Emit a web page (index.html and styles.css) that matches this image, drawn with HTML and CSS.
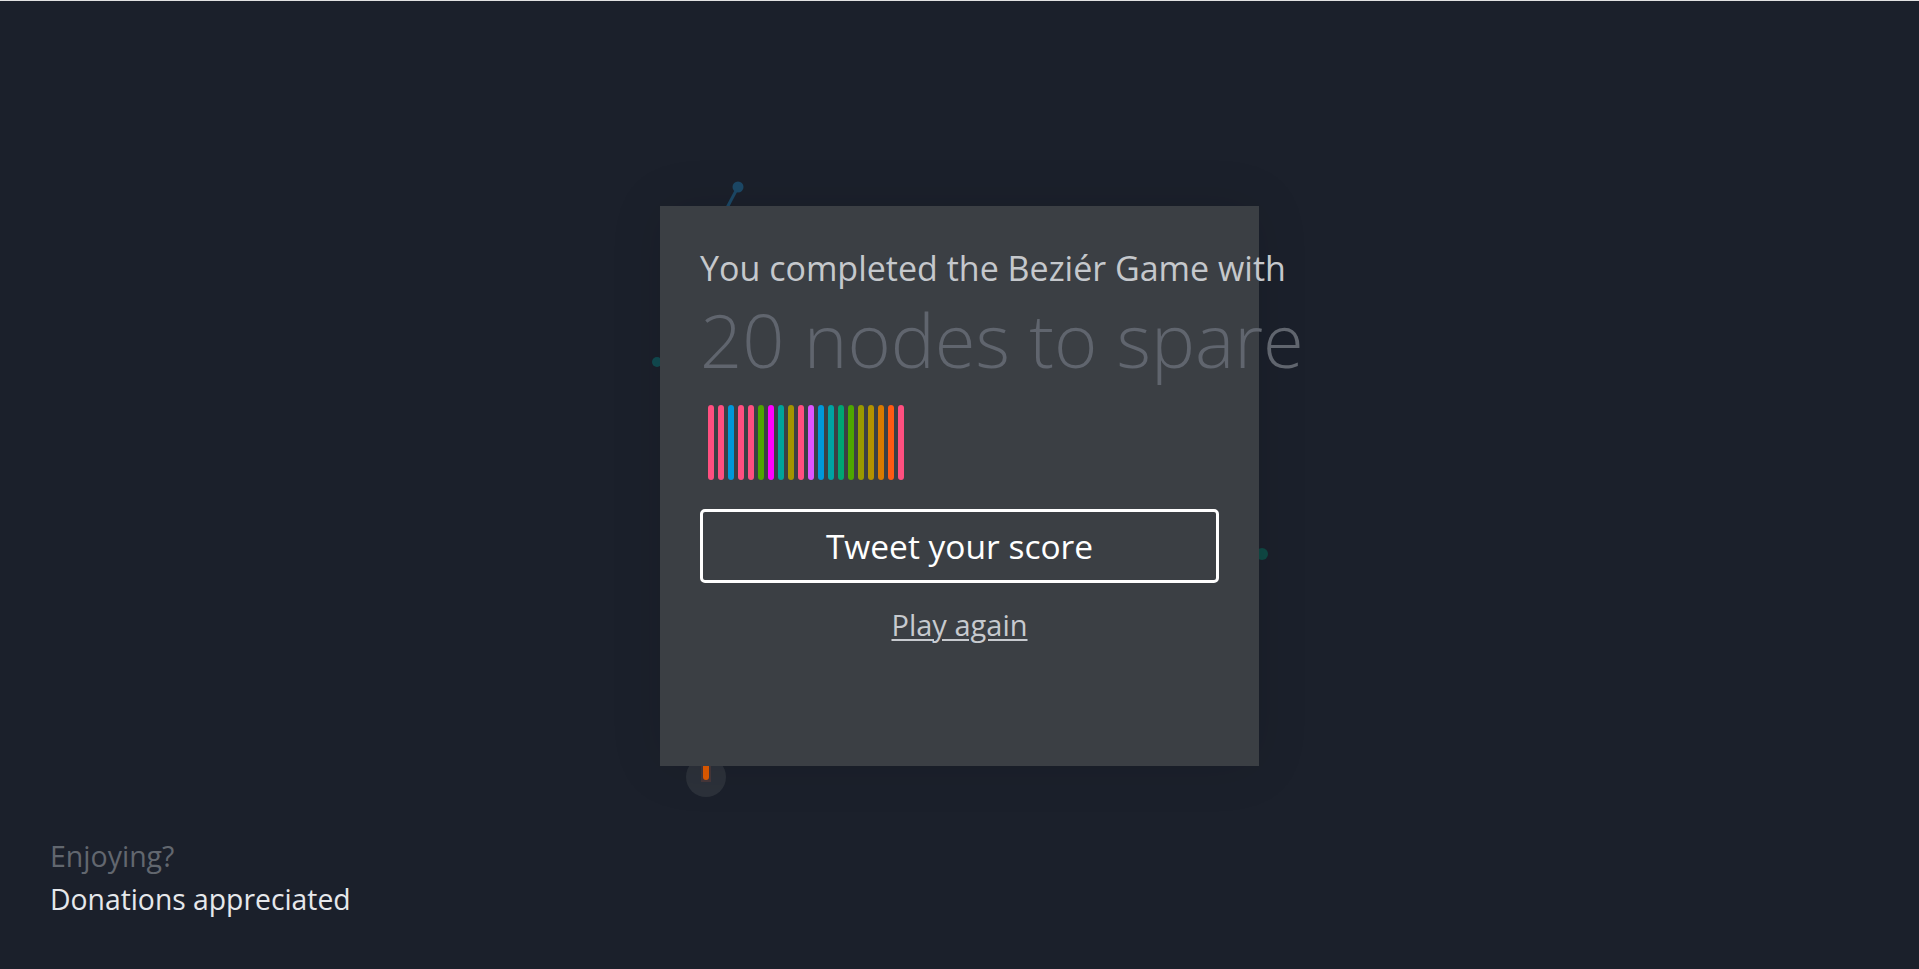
FILE: index.html
```html
<!DOCTYPE html>
<html lang="en">
<head>
<meta charset="utf-8">
<title>Bezier Game</title>
<link rel="stylesheet" href="styles.css">
</head>
<body>
<div class="stage">
  <svg class="canvas" width="1919" height="968" viewBox="0 0 1919 968" aria-hidden="true">
    <line x1="738" y1="186" x2="720" y2="220" stroke="#1c4866" stroke-width="3"/>
    <circle cx="738" cy="186" r="5.5" fill="#1c4866"/>
    <circle cx="657" cy="361" r="5" fill="#114a50"/>
    <circle cx="1262" cy="553" r="6" fill="#0f4844"/>
    <circle cx="706" cy="776" r="20" fill="#2c313a"/>
    <rect x="701" y="760" width="10" height="21" fill="#46373a"/>
    <rect x="703" y="756" width="6" height="23" rx="3" fill="#e05a00"/>
  </svg>

  <section class="card">
    <p class="title">You completed the Beziér Game with</p>
    <p class="big">20 nodes to spare</p>
    <div class="bars">
      <span class="bar c-pink"></span>
      <span class="bar c-pink"></span>
      <span class="bar c-blue"></span>
      <span class="bar c-pink"></span>
      <span class="bar c-pink"></span>
      <span class="bar c-green"></span>
      <span class="bar c-magenta"></span>
      <span class="bar c-teal"></span>
      <span class="bar c-olive"></span>
      <span class="bar c-pink"></span>
      <span class="bar c-violet"></span>
      <span class="bar c-blue"></span>
      <span class="bar c-teal2"></span>
      <span class="bar c-jade"></span>
      <span class="bar c-green"></span>
      <span class="bar c-olive2"></span>
      <span class="bar c-gold"></span>
      <span class="bar c-orange"></span>
      <span class="bar c-red"></span>
      <span class="bar c-pink"></span>
    </div>
    <button class="tweet" type="button">Tweet your score</button>
    <a class="again" href="#">Play again</a>
  </section>

  <footer class="footer">
    <div class="enjoy">Enjoying?</div>
    <a class="donate" href="#">Donations appreciated</a>
  </footer>
</div>
</body>
</html>
```

FILE: styles.css
```css
html, body {
  margin: 0;
  padding: 0;
}

body {
  background: #1b202b;
  border-top: 1px solid #e2e2e2;
  font-family: "Open Sans", "Noto Sans", sans-serif;
  overflow: hidden;
}

.stage {
  position: relative;
  display: grid;
  height: 968px;
  width: 1919px;
}

.canvas {
  position: absolute;
  left: 0;
  top: 0;
}

.card {
  grid-area: 1 / 1;
  place-self: center;
  position: relative;
  width: 599px;
  height: 560px;
  box-sizing: border-box;
  padding: 42px 40px 0;
  margin-top: 2px;
  background: #3b3f44;
  box-shadow: 0 0 50px rgba(0, 0, 0, 0.1);
  display: flex;
  flex-direction: column;
}

.title {
  margin: 0;
  font-size: 34px;
  line-height: 40px;
  color: #c5c8cc;
  white-space: nowrap;
}

.big {
  margin: 12px 0 0;
  font-size: 74px;
  font-weight: 350;
  line-height: 80px;
  color: #60656e;
  white-space: nowrap;
}

.bars {
  margin: 25px 0 0 8px;
  display: flex;
  gap: 4px;
  height: 75px;
}

.bar {
  width: 6px;
  height: 75px;
  border-radius: 3px;
}

.c-pink { background: #ff4f80; }
.c-blue { background: #0098da; }
.c-green { background: #4ea600; }
.c-magenta { background: #ff00ff; }
.c-teal { background: #00a39a; }
.c-teal2 { background: #00a3a3; }
.c-olive { background: #a39400; }
.c-olive2 { background: #999900; }
.c-violet { background: #dd55ff; }
.c-jade { background: #00a572; }
.c-gold { background: #b39200; }
.c-orange { background: #d97a00; }
.c-red { background: #ff5a14; }

.tweet {
  margin-top: 29px;
  height: 74px;
  width: 100%;
  box-sizing: border-box;
  border: 3px solid #ffffff;
  border-radius: 5px;
  background: transparent;
  color: #ffffff;
  font-family: inherit;
  font-size: 33.5px;
  padding: 0;
  cursor: pointer;
}

.again {
  margin-top: 24px;
  align-self: center;
  font-size: 29px;
  line-height: 36px;
  color: #c7cacf;
  text-decoration: underline;
  text-underline-offset: 3px;
  text-decoration-thickness: 2px;
}

.footer {
  grid-area: 1 / 1;
  align-self: end;
  justify-self: start;
  position: relative;
  padding: 0 0 52px 50px;
}

.enjoy {
  font-size: 28.5px;
  line-height: 36px;
  color: #62676f;
}

.donate {
  display: block;
  margin-top: 7px;
  font-size: 28.3px;
  line-height: 36px;
  color: #e6e8eb;
  text-decoration: none;
}
```
